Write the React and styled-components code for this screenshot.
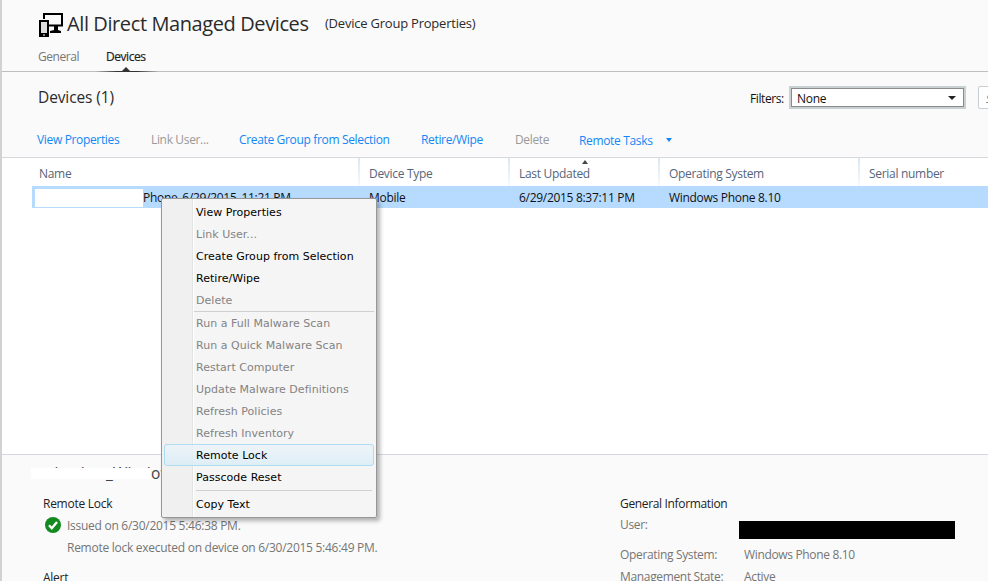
import styled, { createGlobalStyle, css } from "styled-components";

const GlobalStyle = createGlobalStyle`
	* {
		box-sizing: border-box;
	}

	body {
		margin: 0;
		background-color: #fff;
		font-family: "Open Sans", "Noto Sans", sans-serif;
		font-size: 12px;
		letter-spacing: -0.3px;
		overflow: hidden;
	}
`;

const Page = styled.div`
	position: relative;
	display: flex;
	flex-direction: column;
	width: 988px;
	height: 581px;
	overflow: hidden;
	border-left: 2px solid #d2d2d2;
	background-color: #fafafa;
	color: #2b2b2b;
	white-space: nowrap;
`;

const Header = styled.header`
	flex: none;
	height: 72px;
	padding: 8px 0 0 36px;
	border-bottom: 1px solid #bdbfbf;
`;

const TitleRow = styled.div`
	display: flex;
	align-items: center;
	height: 31px;
`;

const HeaderIcon = styled.svg`
	width: 26px;
	height: 26px;
	margin: 3px 3px 0 0;
`;

const Title = styled.h1`
	width: 258px;
	margin: 0;
	padding-bottom: 1px;
	font-size: 20px;
	font-weight: 400;
	letter-spacing: -0.4px;
`;

const SubTitle = styled.span`
	padding-bottom: 2px;
	font-size: 13px;
	letter-spacing: -0.22px;
`;

const Tabs = styled.nav`
	display: flex;
	gap: 27px;
	padding-top: 9px;
	letter-spacing: -0.45px;
`;

const Tab = styled.span`
	position: relative;
	height: 24px;
	line-height: 18px;
	color: ${({ $active }) => ($active ? "#222" : "#777")};
	-webkit-text-stroke: ${({ $active }) => ($active ? "0.2px" : "0")};
	${({ $active }) =>
		$active &&
		css`
			&::before {
				content: "";
				position: absolute;
				left: -11px;
				bottom: 0;
				width: 64px;
				height: 1px;
				background: linear-gradient(90deg, transparent, #333 35%, #333 65%, transparent);
			}

			&::after {
				content: "";
				position: absolute;
				left: 15px;
				bottom: 0;
				border: 5px solid transparent;
				border-top: none;
				border-bottom-color: #333;
			}
		`}
`;

const ListHeader = styled.div`
	display: flex;
	flex: none;
	align-items: center;
	height: 51px;
	padding-left: 36px;
`;

const ListTitle = styled.h2`
	flex: none;
	width: 712px;
	margin: 0;
	padding-bottom: 1px;
	font-size: 15.5px;
	font-weight: 400;
	letter-spacing: -0.12px;
`;

const FilterLabel = styled.label`
	flex: none;
	width: 39px;
	padding-top: 2px;
	color: #111;
	letter-spacing: -0.4px;
`;

const Select = styled.div`
	display: flex;
	flex: none;
	align-items: center;
	justify-content: space-between;
	width: 177px;
	height: 23px;
	padding: 1px 8px 0 6px;
	border: 2px solid #c8d0d2;
	outline: 1px solid #888c8e;
	outline-offset: -3px;
	background-color: #fff;
	color: #111;
`;

const Caret = styled.span`
	border: ${({ $size }) => $size}px solid transparent;
	border-top: 4px solid ${({ $color }) => $color};
	border-bottom: none;
`;

const SearchBox = styled.div`
	flex: none;
	width: 60px;
	height: 23px;
	margin-left: 12px;
	padding: 4px 7px;
	border: 1px solid #c8cfd2;
	border-radius: 2px;
	background-color: #fff;
	color: #777;
	font-size: 11px;
	font-style: italic;
	line-height: 15px;
`;

const Toolbar = styled.div`
	display: flex;
	flex: none;
	align-items: center;
	height: 34px;
	padding: 0 0 2px 35px;
	letter-spacing: -0.34px;
`;

const Command = styled.span`
	display: flex;
	flex: none;
	align-items: center;
	gap: 13px;
	width: ${({ $width }) => $width}px;
	padding-top: ${({ $menu }) => ($menu ? 2 : 0)}px;
	color: ${({ $disabled }) => ($disabled ? "#999" : "#1287f5")};
`;

const Table = styled.section`
	flex: none;
	height: 298px;
	border-top: 1px solid #d6d8de;
	border-bottom: 1px solid #d6d6e0;
	background-color: #fff;
`;

const TableRow = styled.div`
	display: grid;
	grid-template-columns: 328px 150px 150px 200px 1fr;
`;

const HeadRow = styled(TableRow)`
	height: 28px;
	margin-left: 30px;
	color: #56657a;
`;

const HeadCell = styled.div`
	position: relative;
	padding: 7px 0 0 ${({ $first }) => ($first ? 7 : 9)}px;
	line-height: 17px;
	border-right: 2px solid;
	border-image: linear-gradient(#d8e6f1, #f8fbfd) 1;

	&:last-child {
		border: none;
	}
`;

const SortMark = styled.span`
	position: absolute;
	top: 2px;
	left: 72px;
	border: 3.5px solid transparent;
	border-top: none;
	border-bottom: 4px solid #444;
`;

const DataRow = styled(TableRow)`
	height: 22px;
	margin-left: 30px;
	background-color: #b7dbff;
	color: #111;
	line-height: 23px;
`;

const DataCell = styled.div`
	display: flex;
	padding-left: ${({ $first }) => ($first ? 3 : 9)}px;
`;

const NameMask = styled.span`
	width: 108px;
	height: 18px;
	margin-top: 3px;
	background-color: #fff;
`;

const Details = styled.section`
	display: flex;
	flex: 1;
	min-height: 0;
	padding-left: 41px;
	color: #757575;
`;

const StatusColumn = styled.div`
	width: 577px;
	letter-spacing: -0.27px;
`;

const DeviceName = styled.div`
	position: relative;
	height: 37px;
	padding: 7px 0 0 4px;
	color: #444;
	font-size: 15.5px;
	letter-spacing: 0.2px;
	line-height: 22px;

	&::after {
		content: "";
		position: absolute;
		top: 13px;
		left: -12px;
		width: 120px;
		height: 11px;
		background-color: #fff;
	}
`;

const DetailLine = styled.div`
	display: flex;
	align-items: center;
	height: 22px;
	margin-top: ${({ $spaced }) => ($spaced ? 8 : 0)}px;
	padding-left: ${({ $indent }) => ($indent ? 24 : 0)}px;
	color: ${({ $strong }) => ($strong ? "#222" : "inherit")};
`;

const CheckIcon = styled.svg`
	width: 16px;
	height: 16px;
	margin: 0 6px 0 2px;
`;

const InfoColumn = styled.div`
	padding-top: 37px;
	letter-spacing: -0.34px;
`;

const InfoRow = styled.div`
	display: grid;
	grid-template-columns: 124px 216px;
	height: ${({ $tall }) => ($tall ? 30 : 22)}px;
	line-height: 22px;
`;

const Redacted = styled.span`
	width: 216px;
	height: 18px;
	margin: 7px 0 0 -5px;
	background-color: #000;
`;

const Menu = styled.ul`
	position: absolute;
	top: 198px;
	left: 159px;
	width: 216px;
	height: 320px;
	margin: 0;
	padding: 2px;
	border: 1px solid #979797;
	border-radius: 2px;
	background: linear-gradient(90deg, #f0f0f0 30px, #e2e3e3 30px, #e2e3e3 31px, #fff 31px, #fff 32px, #f5f5f5 32px);
	box-shadow: 3px 3px 4px rgba(0, 0, 0, 0.3);
	font-family: "DejaVu Sans", Verdana, sans-serif;
	font-size: 11px;
	letter-spacing: 0.03px;
	list-style: none;
`;

const MenuItem = styled.li`
	height: 22px;
	padding-left: 31px;
	border: 1px solid ${({ $hover }) => ($hover ? "#aedcf1" : "transparent")};
	border-radius: 3px;
	background: ${({ $hover }) => ($hover ? "linear-gradient(rgba(236, 244, 249, 0.8), rgba(217, 236, 246, 0.8))" : "none")};
	color: ${({ $disabled }) => ($disabled ? "#838383" : "#000")};
	line-height: 21px;
`;

const Separator = styled.li`
	height: 1px;
	margin: ${({ $wide }) => ($wide ? "2px 2px 2px 32px" : "0 0 0 30px")};
	background-color: #d0d0d0;
`;

const commands = [
	{ label: "View Properties", width: 114 },
	{ label: "Link User...", width: 88, disabled: true },
	{ label: "Create Group from Selection", width: 182 },
	{ label: "Retire/Wipe", width: 94 },
	{ label: "Delete", width: 64, disabled: true },
	{ label: "Remote Tasks", width: 100, menu: true },
];

const menuItems = [
	{ label: "View Properties" },
	{ label: "Link User...", disabled: true },
	{ label: "Create Group from Selection" },
	{ label: "Retire/Wipe" },
	{ label: "Delete", disabled: true },
	{ separator: true },
	{ label: "Run a Full Malware Scan", disabled: true },
	{ label: "Run a Quick Malware Scan", disabled: true },
	{ label: "Restart Computer", disabled: true },
	{ label: "Update Malware Definitions", disabled: true },
	{ label: "Refresh Policies", disabled: true },
	{ label: "Refresh Inventory", disabled: true },
	{ label: "Remote Lock", hover: true },
	{ label: "Passcode Reset" },
	{ separator: true, wide: true },
	{ label: "Copy Text" },
];

const App = () => {
	return (
		<Page>
			<GlobalStyle />
			<Header>
				<TitleRow>
					<HeaderIcon viewBox='0 0 26 26'>
						<path d='M6 7V2H24V13.5H11' fill='none' stroke='#000' strokeWidth='2' />
						<path d='M16 14h4v4l3 1v2H12v-2l4-1z' />
						<path d='M1 8h10v17H1z' />
						<path d='M3 10h6v11H3z' fill='#ddd' />
						<path d='M5 22.5h2v1H5z' fill='#fff' />
					</HeaderIcon>
					<Title>All Direct Managed Devices</Title>
					<SubTitle>(Device Group Properties)</SubTitle>
				</TitleRow>
				<Tabs>
					<Tab>General</Tab>
					<Tab $active>Devices</Tab>
				</Tabs>
			</Header>
			<ListHeader>
				<ListTitle>Devices (1)</ListTitle>
				<FilterLabel>Filters:</FilterLabel>
				<Select>
					None
					<Caret $size={4} $color='#222' />
				</Select>
				<SearchBox>Search</SearchBox>
			</ListHeader>
			<Toolbar>
				{commands.map(({ label, width, disabled, menu }) => (
					<Command key={label} $width={width} $disabled={disabled} $menu={menu}>
						{label}
						{menu && <Caret $size={3.5} $color='#1287f5' />}
					</Command>
				))}
			</Toolbar>
			<Table>
				<HeadRow>
					<HeadCell $first>Name</HeadCell>
					<HeadCell>Device Type</HeadCell>
					<HeadCell>
						Last Updated
						<SortMark />
					</HeadCell>
					<HeadCell>Operating System</HeadCell>
					<HeadCell>Serial number</HeadCell>
				</HeadRow>
				<DataRow>
					<DataCell $first>
						<NameMask />
						Phone_6/29/2015_11:21 PM
					</DataCell>
					<DataCell>Mobile</DataCell>
					<DataCell>6/29/2015 8:37:11 PM</DataCell>
					<DataCell>Windows Phone 8.10</DataCell>
					<DataCell />
				</DataRow>
			</Table>
			<Details>
				<StatusColumn>
					<DeviceName>chesher_Windows</DeviceName>
					<DetailLine $strong>Remote Lock</DetailLine>
					<DetailLine>
						<CheckIcon viewBox='0 0 16 16'>
							<circle cx='8' cy='8' r='8' fill='#128a1e' />
							<path d='M4 8.2l2.8 3L12 5' fill='none' stroke='#fff' strokeWidth='2.4' />
						</CheckIcon>
						Issued on 6/30/2015 5:46:38 PM.
					</DetailLine>
					<DetailLine $indent>Remote lock executed on device on 6/30/2015 5:46:49 PM.</DetailLine>
					<DetailLine $strong $spaced>
						Alert
					</DetailLine>
				</StatusColumn>
				<InfoColumn>
					<DetailLine $strong>General Information</DetailLine>
					<InfoRow $tall>
						<span>User:</span>
						<Redacted />
					</InfoRow>
					<InfoRow>
						<span>Operating System:</span>
						<span>Windows Phone 8.10</span>
					</InfoRow>
					<InfoRow>
						<span>Management State:</span>
						<span>Active</span>
					</InfoRow>
				</InfoColumn>
			</Details>
			<Menu>
				{menuItems.map(({ label, separator, wide, disabled, hover }, index) =>
					separator ? (
						<Separator key={index} $wide={wide} />
					) : (
						<MenuItem key={index} $disabled={disabled} $hover={hover}>
							{label}
						</MenuItem>
					)
				)}
			</Menu>
		</Page>
	);
};

export default App;
